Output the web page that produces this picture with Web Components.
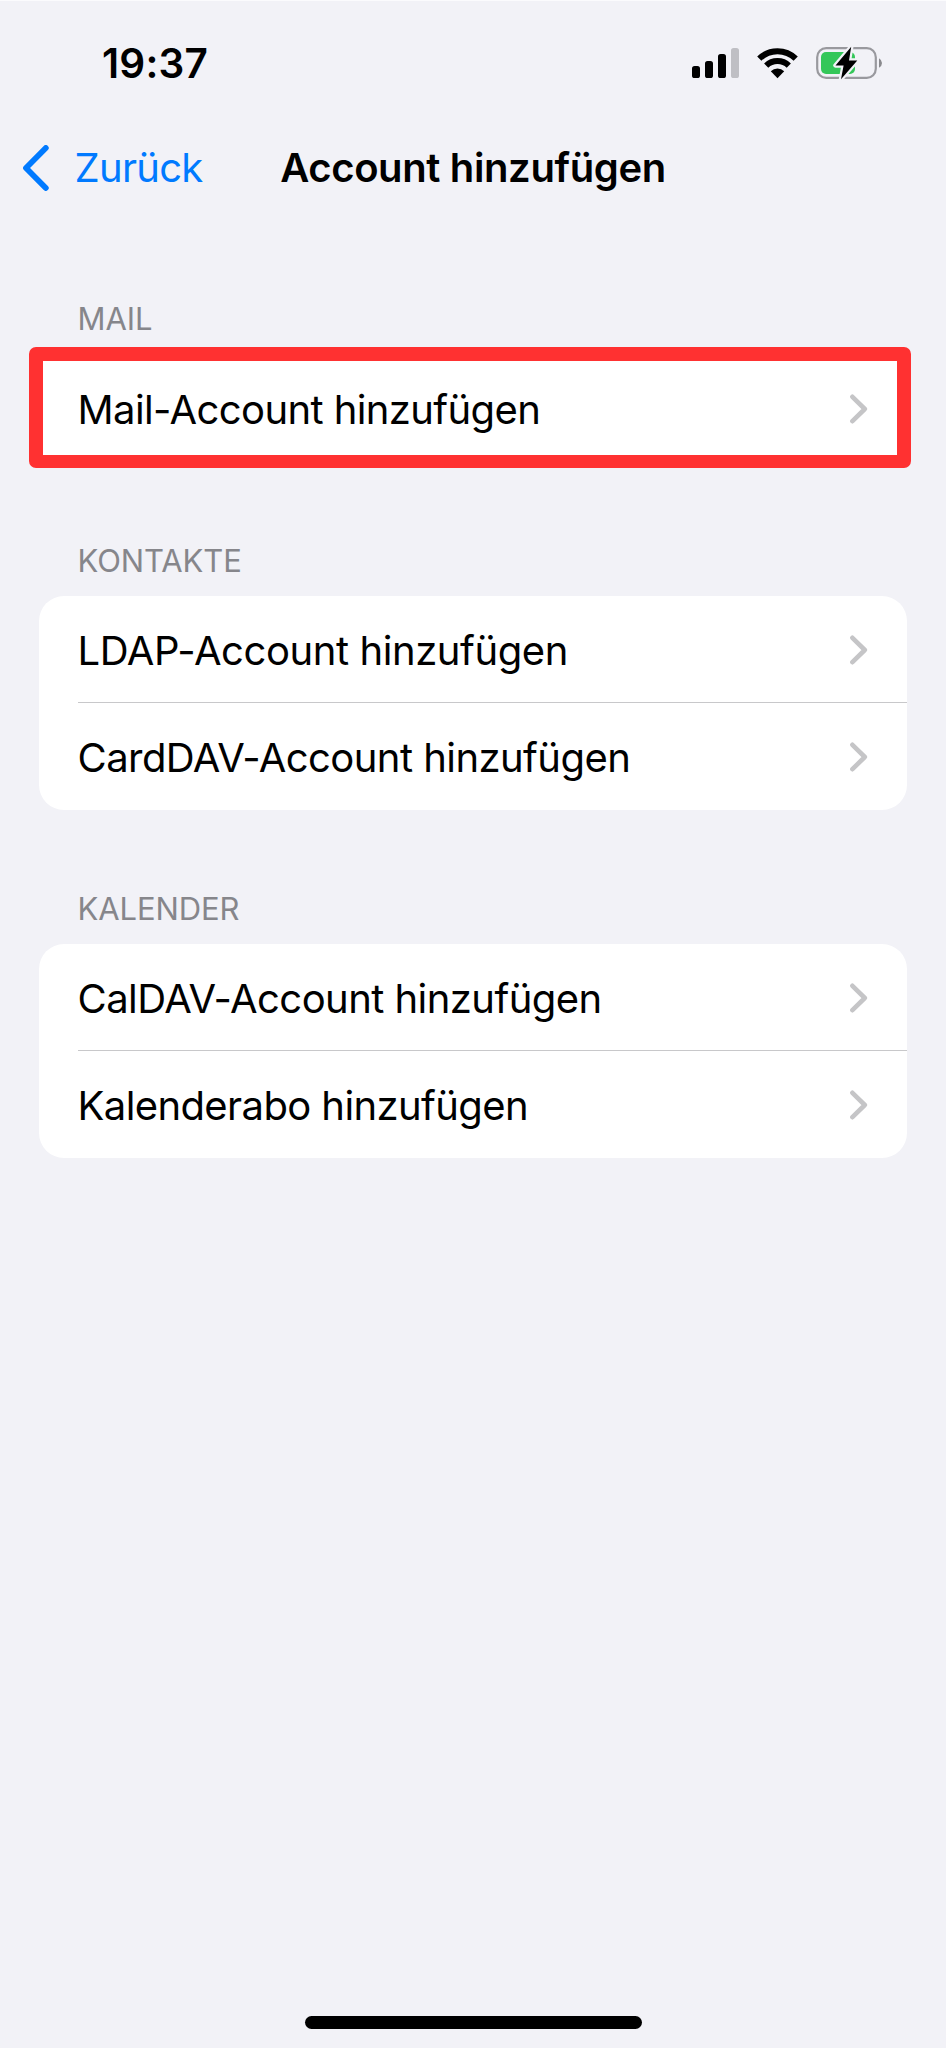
<!DOCTYPE html>
<html lang="de">
<head>
<meta charset="utf-8">
<title>Account hinzufügen</title>
<style>
  html, body { margin: 0; }
  body {
    background: #f2f2f7;
    color: #000;
    font-family: Inter, "Liberation Sans", sans-serif;
  }
</style>
</head>
<body>
<settings-screen>
  <status-bar slot="status" time="19:37"></status-bar>
  <nav-bar slot="nav" back="Zurück">Account hinzufügen</nav-bar>
  <settings-group label="Mail" marked>
    <settings-row style="--track: -0.6px">Mail-Account hinzufügen</settings-row>
  </settings-group>
  <settings-group label="Kontakte">
    <settings-row style="--track: -0.42px">LDAP-Account hinzufügen</settings-row>
    <settings-row>CardDAV-Account hinzufügen</settings-row>
  </settings-group>
  <settings-group label="Kalender">
    <settings-row>CalDAV-Account hinzufügen</settings-row>
    <settings-row style="--track: -0.6px">Kalenderabo hinzufügen</settings-row>
  </settings-group>
</settings-screen>

<script>
const sharedStyle = `
:host { display: block; box-sizing: border-box; }
* { box-sizing: border-box; }
svg { display: block; }
`;

function ensure(name, ctor) {
  if (!customElements.get(name)) {
    customElements.define(name, ctor);
  }
}

class SettingsScreen extends HTMLElement {
  constructor() {
    super();
    const root = this.attachShadow({ mode: "open" });
    root.innerHTML = `
      <style>
        ${sharedStyle}
        :host {
          display: flex;
          flex-direction: column;
          width: 946px;
          height: 2048px;
          border-top: 1px solid #fbfbfd;
          overflow: hidden;
        }
        main { flex: 1; padding-top: 75px; }
        footer { display: flex; justify-content: center; padding: 0 0 19px 1px; }
        .home { width: 337px; height: 13px; border-radius: 7px; background: #000; }
      </style>
      <slot name="status"></slot>
      <slot name="nav"></slot>
      <main><slot></slot></main>
      <footer><div class="home"></div></footer>
    `;
  }
}

class StatusBar extends HTMLElement {
  constructor() {
    super();
    const root = this.attachShadow({ mode: "open" });
    root.innerHTML = `
      <style>
        ${sharedStyle}
        :host {
          display: flex;
          justify-content: space-between;
          height: 118.5px;
          padding: 37.5px 64px 0 102px;
        }
        .time { font-size: 40.5px; font-weight: 600; line-height: 50px; letter-spacing: 0.2px; }
        .icons { display: flex; gap: 18px; padding-top: 7.5px; }
      </style>
      <span class="time"></span>
      <div class="icons">
        <svg width="47" height="34" viewBox="0 0 47 34">
          <rect x="0" y="20" width="8" height="12" rx="2.6"/>
          <rect x="13" y="15" width="8" height="17" rx="2.6"/>
          <rect x="26" y="8" width="8" height="24" rx="2.6"/>
          <rect x="39" y="2" width="8" height="30" rx="2.6" fill="#bfbfc4"/>
        </svg>
        <svg width="41" height="34" viewBox="0 0 41 34">
          <g fill="none" stroke="#000" stroke-width="6">
            <path d="M2.3 12.6A26 26 0 0 1 38.7 12.6"/>
            <path d="M9.2 19.6A16.2 16.2 0 0 1 31.8 19.6"/>
          </g>
          <path d="M20.5 32.2L13.8 25.2A9.6 9.6 0 0 1 27.2 25.2Z"/>
        </svg>
        <svg width="66" height="34" viewBox="0 0 66 34">
          <rect x="1.2" y="2.2" width="58.6" height="29.6" rx="9" fill="none" stroke="#99999e" stroke-width="2.2"/>
          <path d="M63 12.2q3 1.8 3 4.8t-3 4.8z" fill="#8a8a8e"/>
          <rect x="5" y="6" width="34" height="22" rx="5" fill="#34c759"/>
          <path d="M35.2 .8L19.5 19.4H27.6L25 33.2L41.3 14.4H33Z" stroke="#f2f2f7" stroke-width="4.5" stroke-linejoin="round"/>
          <path d="M35.2 .8L19.5 19.4H27.6L25 33.2L41.3 14.4H33Z"/>
        </svg>
      </div>
    `;
  }
  connectedCallback() {
    this.shadowRoot.querySelector(".time").textContent = this.getAttribute("time") || "";
  }
}

class NavBar extends HTMLElement {
  constructor() {
    super();
    const root = this.attachShadow({ mode: "open" });
    root.innerHTML = `
      <style>
        ${sharedStyle}
        :host {
          display: grid;
          grid-template-columns: 1fr auto 1fr;
          align-items: center;
          height: 96px;
          padding: 0 19.5px;
          font-size: 40px;
          line-height: 50px;
        }
        .back { display: flex; align-items: center; gap: 26px; color: #007aff; }
        .back-label { letter-spacing: -0.7px; }
        .title { font-weight: 600; letter-spacing: -0.37px; }
      </style>
      <div class="back">
        <svg width="29" height="46" viewBox="0 0 29 46">
          <path d="M25.8 3L6 23L25.8 43" fill="none" stroke="currentColor" stroke-width="5.8" stroke-linecap="round" stroke-linejoin="round"/>
        </svg>
        <span class="back-label"></span>
      </div>
      <div class="title"><slot></slot></div>
    `;
  }
  connectedCallback() {
    this.shadowRoot.querySelector(".back-label").textContent = this.getAttribute("back") || "";
  }
}

class SettingsGroup extends HTMLElement {
  constructor() {
    super();
    const root = this.attachShadow({ mode: "open" });
    root.innerHTML = `
      <style>
        ${sharedStyle}
        :host { padding: 0 39px; margin-bottom: 70.5px; }
        .label {
          padding: 9.6px 0 0 38.5px;
          height: 64px;
          color: #86868b;
          font-size: 31px;
          line-height: 38px;
          letter-spacing: -0.1px;
          text-transform: uppercase;
        }
        .card {
          border-radius: 25px;
          background: #fff;
          overflow: hidden;
        }
        /* the marker frame reaches a little past the card's own box */
        :host([marked]) .card {
          --row-height: 94px;
          --row-start: 34.5px;
          --row-end: 29.5px;
          margin: -7.5px -4px -6.5px -10px;
          border: solid #ff3131;
          border-width: 14px 14px 13px 14px;
          border-radius: 7px;
        }
      </style>
      <div class="label"></div>
      <div class="card"><slot></slot></div>
    `;
  }
  connectedCallback() {
    this.shadowRoot.querySelector(".label").textContent = this.getAttribute("label") || "";
  }
}

class SettingsRow extends HTMLElement {
  constructor() {
    super();
    const root = this.attachShadow({ mode: "open" });
    root.innerHTML = `
      <style>
        ${sharedStyle}
        :host { padding-left: var(--row-start, 38.5px); }
        .row {
          display: flex;
          align-items: center;
          justify-content: space-between;
          height: var(--row-height, 106px);
          padding: 1px var(--row-end, 39px) 0 0;
          font-size: 40px;
          line-height: 50px;
          letter-spacing: var(--track, -0.55px);
        }
        .text { padding-top: 2px; }
        :host(:not(:first-child)) .row { height: 107.5px; border-top: 1px solid #c8c8ca; }
      </style>
      <div class="row">
        <span class="text"><slot></slot></span>
        <svg width="19" height="30" viewBox="0 0 19 30">
          <path d="M3.4 2.8L15.8 15L3.4 27.2" fill="none" stroke="#c5c5c7" stroke-width="4.6" stroke-linecap="round" stroke-linejoin="round"/>
        </svg>
      </div>
    `;
  }
}

ensure("settings-screen", SettingsScreen);
ensure("status-bar", StatusBar);
ensure("nav-bar", NavBar);
ensure("settings-group", SettingsGroup);
ensure("settings-row", SettingsRow);
</script>
</body>
</html>
